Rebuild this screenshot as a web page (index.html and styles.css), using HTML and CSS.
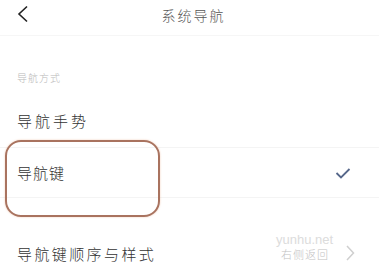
FILE: index.html
```html
<!DOCTYPE html>
<html lang="zh">
<head>
  <meta charset="UTF-8">
  <title>系统导航</title>
  <link rel="stylesheet" href="styles.css">
</head>
<body>

  <div class="topbar">
    <svg class="back" width="12" height="18" viewBox="0 0 12 18">
      <path d="M10 1.5 L2 9 L10 16.5" fill="none" stroke="#222" stroke-width="1.6"/>
    </svg>
    <span class="title">系统导航</span>
  </div>

  <div class="section">导航方式</div>

  <div class="row first">
    <span>导航手势</span>
  </div>

  <div class="row selected">
    <span>导航键</span>
    <svg class="check" width="16" height="12" viewBox="0 0 16 12">
      <path d="M1.5 6 L6 10.5 L14.5 2" fill="none" stroke="#56678a" stroke-width="1.8"/>
    </svg>
    <div class="mark"></div>
  </div>

  <div class="row last">
    <span>导航键顺序与样式</span>
    <span class="value">
      <span class="wm">yunhu.net</span>
      右侧返回
    </span>
    <svg class="arrow" width="10" height="16" viewBox="0 0 10 16">
      <path d="M2 1 L8.5 8 L2 15" fill="none" stroke="#cfcfcf" stroke-width="1.5"/>
    </svg>
  </div>

</body>
</html>
```

FILE: styles.css
```css
body {
  margin: 0;
  width: 379px;
  height: 264px;
  overflow: hidden;
  background-color: #ffffff;
  font-family: "Noto Sans CJK SC", "Noto Sans", sans-serif;
  color: #333;
}

.topbar {
  height: 35px;
  display: flex;
  align-items: center;
  justify-content: center;
  position: relative;
  border-bottom: 1px solid #f6f6f6;
}

.back {
  position: absolute;
  left: 17px;
  top: 5px;
}

.title {
  font-size: 14px;
  font-weight: 300;
  color: #555;
  letter-spacing: 2px;
  margin-left: 8px;
  margin-top: -6px;
}

.section {
  margin: 35px 0 0 17px;
  font-size: 10px;
  font-weight: 300;
  color: #b9b9b9;
  letter-spacing: 1px;
  line-height: 14px;
}

.row {
  display: flex;
  align-items: center;
  padding: 0 24px 0 17px;
  height: 52px;
  font-size: 15px;
  font-weight: 300;
  letter-spacing: 3px;
  color: #333;
  position: relative;
}

.row.first {
  margin-top: 9px;
  height: 53px;
  border-bottom: 1px solid #f4f4f4;
}

.row.selected {
  justify-content: space-between;
  height: 49px;
  border-bottom: 1px solid #f4f4f4;
  letter-spacing: 1px;
}

.check {
  margin-right: 4px;
}

.mark {
  position: absolute;
  left: 5px;
  top: -8px;
  width: 151px;
  height: 73px;
  border: 2px solid #a9735f;
  border-radius: 16px;
  box-shadow: 0 0 2px rgba(230, 160, 120, 0.6);
}

.row.last {
  margin-top: 44px;
  height: 22px;
  letter-spacing: 2.4px;
}

.row.last > span:first-child {
  flex: 1;
}

.value {
  position: relative;
  font-size: 11px;
  line-height: 14px;
  color: #c2c2c2;
  letter-spacing: 1px;
  margin-right: 16px;
  margin-top: 2px;
}

.wm {
  position: absolute;
  left: -5px;
  top: -14px;
  font-family: "Liberation Sans", sans-serif;
  font-size: 13px;
  line-height: 14px;
  letter-spacing: 0;
  color: #dcdcdc;
}
```
